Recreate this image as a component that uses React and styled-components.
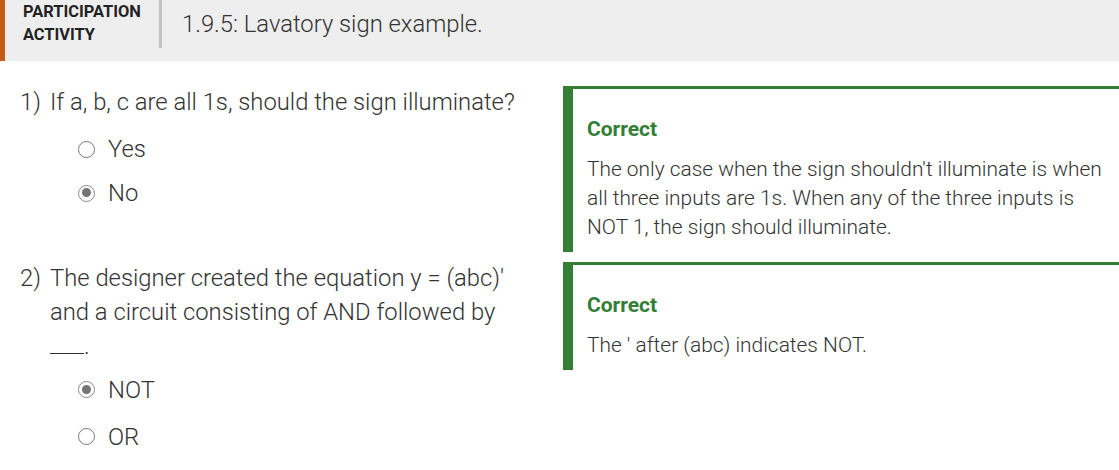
import React from 'react';
import styled, { createGlobalStyle } from 'styled-components';

const GlobalStyle = createGlobalStyle`
  body {
    margin: 0;
    background: #fff;
    font-family: Roboto, 'Liberation Sans', sans-serif;
    color: #333;
  }
`;

const light = `'Roboto Light', Roboto, 'Liberation Sans', sans-serif`;

const Header = styled.div`
  display: flex;
  align-items: flex-start;
  height: 61px;
  background: #eeeeee;
  border-left: 5px solid #c55a11;
`;

const Kind = styled.div`
  width: 136px;
  height: 48px;
  padding: 0 0 0 18px;
  border-right: 3px solid #c2c2c2;
  font-size: 16.4px;
  font-weight: 700;
  line-height: 23px;
  color: #222;
  text-transform: uppercase;
  white-space: nowrap;
`;

const Title = styled.h1`
  margin: 0;
  padding: 8px 0 0 20px;
  font-family: ${light};
  font-size: 23.8px;
  font-weight: 300;
  line-height: 32px;
  color: #333;
`;

const List = styled.div`
  display: flex;
  flex-direction: column;
  gap: 10px;
  padding-top: 25px;
`;

const Row = styled.div`
  display: flex;
  align-items: flex-start;
`;

const QuestionCol = styled.div`
  width: 563px;
  flex-shrink: 0;
`;

const Prompt = styled.div`
  display: flex;
  margin-top: -1px;
  font-family: ${light};
  font-size: 23.8px;
  font-weight: 300;
  line-height: 34px;
`;

const Num = styled.span`
  width: 30px;
  padding-left: 20px;
  flex-shrink: 0;
`;

const Text = styled.div`
  width: 490px;
`;

const Blank = styled.span`
  display: inline-block;
  width: 34px;
  border-bottom: 1px solid #333;
  line-height: 22px;
`;

const Options = styled.div`
  display: flex;
  flex-direction: column;
  margin-top: ${(p) => p.$top}px;
  padding-left: 78px;
`;

const Option = styled.label`
  display: flex;
  align-items: center;
  gap: 13px;
  height: ${(p) => p.$h}px;
  font-family: ${light};
  font-size: 23.8px;
  font-weight: 300;
  color: #333;
`;

const Radio = styled.span`
  position: relative;
  box-sizing: border-box;
  width: 17px;
  height: 17px;
  border-radius: 50%;
  border: 1.5px solid ${(p) => (p.$checked ? '#8a8a8a' : '#777')};
  flex-shrink: 0;

  &::after {
    content: '';
    display: ${(p) => (p.$checked ? 'block' : 'none')};
    position: absolute;
    left: 2.5px;
    top: 2.5px;
    width: 9px;
    height: 9px;
    border-radius: 50%;
    background: #757575;
  }
`;

const Feedback = styled.div`
  flex: 1;
  padding: 28px 8px 10px 14px;
  border-left: 10px solid #347f36;
  border-top: 3px solid #347f36;
`;

const Verdict = styled.div`
  font-size: 21px;
  font-weight: 700;
  line-height: 24px;
  color: #347f36;
  margin-bottom: 14px;
`;

const Explain = styled.div`
  font-family: ${light};
  font-size: 20.9px;
  font-weight: 300;
  line-height: 29px;
  color: #333;
`;

const questions = [
  {
    num: '1)',
    text: 'If a, b, c are all 1s, should the sign illuminate?',
    options: [
      { label: 'Yes', checked: false },
      { label: 'No', checked: true },
    ],
    top: 8,
    h: 44,
    explain:
      "The only case when the sign shouldn't illuminate is when all three inputs are 1s. When any of the three inputs is NOT 1, the sign should illuminate.",
  },
  {
    num: '2)',
    text: (
      <>
        The designer created the equation y = (abc)'
        <br />
        and a circuit consisting of AND followed by
        <br />
        <Blank />.
      </>
    ),
    options: [
      { label: 'NOT', checked: true },
      { label: 'OR', checked: false },
    ],
    top: 3,
    h: 47,
    explain: "The ' after (abc) indicates NOT.",
  },
];

export default function App() {
  return (
    <>
      <GlobalStyle />
      <Header>
        <Kind>
          Participation
          <br />
          Activity
        </Kind>
        <Title>1.9.5: Lavatory sign example.</Title>
      </Header>
      <List>
        {questions.map((q) => (
          <Row key={q.num}>
            <QuestionCol>
              <Prompt>
                <Num>{q.num}</Num>
                <Text>{q.text}</Text>
              </Prompt>
              <Options $top={q.top}>
                {q.options.map((o) => (
                  <Option key={o.label} $h={q.h}>
                    <Radio $checked={o.checked} />
                    {o.label}
                  </Option>
                ))}
              </Options>
            </QuestionCol>
            <Feedback>
              <Verdict>Correct</Verdict>
              <Explain>{q.explain}</Explain>
            </Feedback>
          </Row>
        ))}
      </List>
    </>
  );
}
